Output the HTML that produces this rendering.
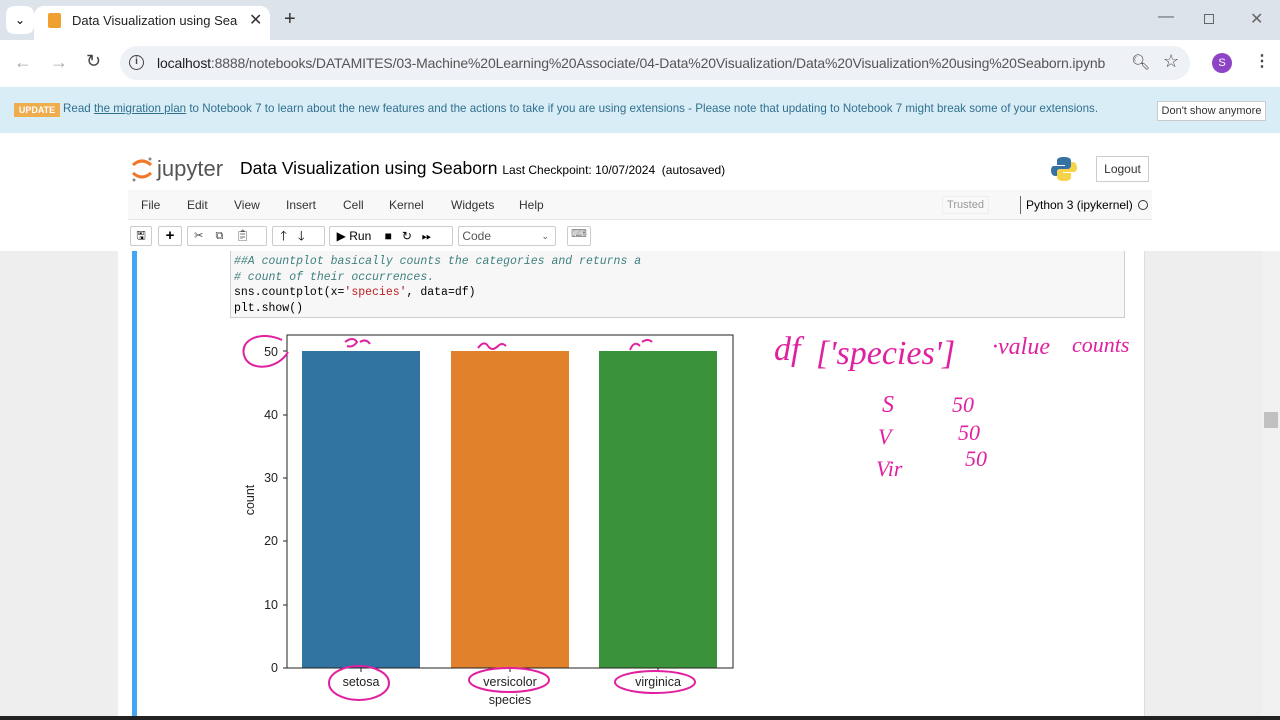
<!DOCTYPE html>
<html><head><meta charset="utf-8"><style>
*{margin:0;padding:0;box-sizing:border-box}
body{width:1280px;height:720px;overflow:hidden;background:#fff;font-family:"Liberation Sans",sans-serif;position:relative}
.abs{position:absolute;white-space:nowrap}
.mono{font-family:"Liberation Mono",monospace}
.btn{position:absolute;top:226px;height:20px;border:1px solid #ccc;background:#fff;border-radius:2px;white-space:nowrap}
</style></head><body>
<!-- tab bar -->
<div class="abs" style="left:0;top:0;width:1280px;height:40px;background:#dde3ea"></div>
<div class="abs" style="left:6px;top:6px;width:28px;height:28px;background:#fff;border-radius:8px;font-size:12px;text-align:center;line-height:28px">⌄</div>
<div class="abs" style="left:34px;top:6px;width:236px;height:36px;background:#fff;border-radius:10px 10px 0 0"></div>
<div class="abs" style="left:48px;top:13px;width:13px;height:15px;background:#f0a030;border-radius:2px"></div>
<div class="abs" style="left:72px;top:13px;width:166px;overflow:hidden;font-size:13px;color:#222">Data Visualization using Seaborn</div>
<div class="abs" style="left:249px;top:10px;font-size:16px;color:#333">✕</div>
<div class="abs" style="left:284px;top:8px;font-size:20px;color:#333">+</div>
<div class="abs" style="left:1158px;top:8px;font-size:16px;color:#666">—</div>
<div class="abs" style="left:1204px;top:14px;width:10px;height:10px;border:1px solid #666"></div>
<div class="abs" style="left:1250px;top:9px;font-size:16px;color:#666">✕</div>
<!-- address bar -->
<div class="abs" style="left:0;top:40px;width:1280px;height:46px;background:#fff"></div>
<div class="abs" style="left:14px;top:52px;font-size:18px;color:#aaa">←</div>
<div class="abs" style="left:50px;top:52px;font-size:18px;color:#aaa">→</div>
<div class="abs" style="left:86px;top:51px;font-size:18px;color:#444">↻</div>
<div class="abs" style="left:120px;top:46px;width:1070px;height:34px;background:#eef1f5;border-radius:17px"></div>
<div class="abs" style="left:129px;top:55px;width:15px;height:15px;border:1.5px solid #444;border-radius:50%;font-size:10px;text-align:center;line-height:12px;font-weight:bold;color:#444">i</div>
<div class="abs" style="left:157px;top:55px;font-size:14px;color:#202124;letter-spacing:-0.15px">localhost<span style="color:#555">:8888/notebooks/DATAMITES/03-Machine%20Learning%20Associate/04-Data%20Visualization/Data%20Visualization%20using%20Seaborn.ipynb</span></div>
<div class="abs" style="left:1131px;top:53px;font-size:15px;color:#444">🔍︎</div>
<div class="abs" style="left:1163px;top:51px;font-size:18px;color:#444">☆</div>
<div class="abs" style="left:1212px;top:53px;width:20px;height:20px;background:#8e44c4;border-radius:50%;color:#fff;font-size:11px;text-align:center;line-height:20px">S</div>
<div class="abs" style="left:1254px;top:51px;font-size:16px;color:#444;font-weight:bold">⋮</div>
<!-- banner -->
<div class="abs" style="left:0;top:87px;width:1280px;height:46px;background:#d9edf7"></div>
<div class="abs" style="left:14px;top:103px;width:46px;height:14px;background:#f0ad4e;color:#fff;font-size:9px;font-weight:bold;text-align:center;line-height:14px">UPDATE</div>
<div class="abs" style="left:63px;top:102px;font-size:11.6px;color:#31708f">Read <u>the migration plan</u> to Notebook 7 to learn about the new features and the actions to take if you are using extensions - Please note that updating to Notebook 7 might break some of your extensions.</div>
<div class="abs" style="left:1157px;top:101px;width:109px;height:20px;background:#fff;border:1px solid #ccc;font-size:11px;color:#333;text-align:center;line-height:18px">Don't show anymore</div>
<!-- header -->
<svg class="abs" style="left:130px;top:155px" width="24" height="28"><path d="M3 10 Q12 2 21 10" stroke="#f37726" stroke-width="3" fill="none"/><path d="M3 18 Q12 26 21 18" stroke="#f37726" stroke-width="3" fill="none"/><circle cx="4" cy="25" r="1.5" fill="#888"/><circle cx="20" cy="4" r="1.5" fill="#888"/></svg>
<div class="abs" style="left:157px;top:156px;font-size:22px;color:#555">jupyter</div>
<div class="abs" style="left:240px;top:158px;font-size:17.5px;color:#000">Data Visualization using Seaborn <span style="font-size:12px">Last Checkpoint: 10/07/2024&nbsp;&nbsp;(autosaved)</span></div>
<svg class="abs" style="left:1051px;top:156px" width="26" height="26"><path d="M13 1 C5 1 6 5 6 5 V9 H14 V10 H3 C0 10 0 14 0 14 C0 20 4 20 4 20 H6 V16 C6 13 9 13 9 13 H17 C19 13 20 11 20 10 V5 C20 2 17 1 13 1Z" fill="#3772a4"/><path d="M13 25 C21 25 20 21 20 21 V17 H12 V16 H23 C26 16 26 12 26 12 C26 6 22 6 22 6 H20 V10 C20 13 17 13 17 13 H9 C7 13 6 15 6 16 V21 C6 24 9 25 13 25Z" fill="#f5d44a"/></svg>
<div class="abs" style="left:1096px;top:156px;width:53px;height:26px;border:1px solid #ccc;font-size:12px;text-align:center;line-height:24px;color:#333">Logout</div>
<div class="abs" style="left:128px;top:190px;width:1024px;height:30px;background:#f8f8f8;border-bottom:1px solid #e7e7e7"></div>
<div class="abs" style="left:141px;top:198px;font-size:12px;color:#333">File</div>
<div class="abs" style="left:187px;top:198px;font-size:12px;color:#333">Edit</div>
<div class="abs" style="left:234px;top:198px;font-size:12px;color:#333">View</div>
<div class="abs" style="left:286px;top:198px;font-size:12px;color:#333">Insert</div>
<div class="abs" style="left:343px;top:198px;font-size:12px;color:#333">Cell</div>
<div class="abs" style="left:389px;top:198px;font-size:12px;color:#333">Kernel</div>
<div class="abs" style="left:451px;top:198px;font-size:12px;color:#333">Widgets</div>
<div class="abs" style="left:519px;top:198px;font-size:12px;color:#333">Help</div>
<div class="abs" style="left:942px;top:196px;width:47px;height:18px;border:1px solid #eee;font-size:11px;color:#999;text-align:center;line-height:16px">Trusted</div>
<div class="abs" style="left:1020px;top:196px;width:1px;height:18px;background:#666"></div>
<div class="abs" style="left:1026px;top:198px;font-size:12px;color:#000">Python 3 (ipykernel)</div>
<div class="abs" style="left:1138px;top:200px;width:10px;height:10px;border:1.5px solid #333;border-radius:50%"></div>
<!-- toolbar -->
<div class="btn" style="left:130px;width:22px;font-size:11px;text-align:center">🖫</div>
<div class="btn" style="left:158px;width:24px;font-size:15px;text-align:center;line-height:17px;font-weight:bold">+</div>
<div class="btn" style="left:187px;width:80px;font-size:11px;color:#444;line-height:18px">&nbsp;&nbsp;✂&nbsp;&nbsp;&nbsp;&nbsp;⧉&nbsp;&nbsp;&nbsp;&nbsp;📋︎</div>
<div class="btn" style="left:272px;width:53px;font-size:13px;line-height:17px">&nbsp;&nbsp;🡑&nbsp;&nbsp;&nbsp;🡓</div>
<div class="btn" style="left:329px;width:124px;font-size:12px;line-height:18px">&nbsp;&nbsp;▶ Run&nbsp;&nbsp;&nbsp;&nbsp;■&nbsp;&nbsp;&nbsp;↻&nbsp;&nbsp;&nbsp;⏩︎</div>
<div class="btn" style="left:458px;width:98px;font-size:12px;line-height:18px;color:#555">&nbsp;Code<span style="position:absolute;right:6px;font-size:9px">⌄</span></div>
<div class="btn" style="left:567px;width:24px;font-size:11px;text-align:center;color:#777">⌨</div>
<!-- notebook area -->
<div class="abs" style="left:0;top:251px;width:1280px;height:469px;background:#eee"></div>
<div class="abs" style="left:118px;top:251px;width:1027px;height:469px;background:#fff;border-right:1px solid #ddd"></div>
<div class="abs" style="left:132px;top:251px;width:5px;height:469px;background:#42a5f5"></div>
<div class="abs" style="left:1262px;top:251px;width:18px;height:469px;background:#f1f1f1"></div>
<div class="abs" style="left:1264px;top:412px;width:14px;height:16px;background:#c1c1c1"></div>
<div class="abs" style="left:0;top:716px;width:1280px;height:4px;background:#222"></div>
<div class="abs" style="left:230px;top:251px;width:895px;height:67px;background:#f7f7f7;border:1px solid #cfcfcf;border-top:none"></div>
<div class="abs mono" style="left:234px;top:254px;font-size:11.5px;line-height:15.5px;color:#000;white-space:pre"><i style="color:#408080">##A countplot basically counts the categories and returns a
# count of their occurrences.</i>
sns.countplot(x=<span style="color:#ba2121">'species'</span>, data=df)
plt.show()</div>
<!-- chart -->
<svg class="abs" style="left:230px;top:320px" width="540" height="400" font-family="Liberation Sans, sans-serif" font-size="12.5">
<rect x="72" y="31" width="118" height="317" fill="#3274a1"/>
<rect x="221" y="31" width="118" height="317" fill="#e1812c"/>
<rect x="369" y="31" width="118" height="317" fill="#3a923a"/>
<rect x="57" y="15" width="446" height="333" fill="none" stroke="#222" stroke-width="1"/>
<g fill="#222" text-anchor="end">
<text x="48" y="352">0</text><text x="48" y="289">10</text><text x="48" y="225">20</text><text x="48" y="162">30</text><text x="48" y="99">40</text><text x="48" y="36">50</text></g>
<g stroke="#222"><line x1="53" x2="57" y1="348" y2="348"/><line x1="53" x2="57" y1="285" y2="285"/><line x1="53" x2="57" y1="221" y2="221"/><line x1="53" x2="57" y1="158" y2="158"/><line x1="53" x2="57" y1="95" y2="95"/><line x1="53" x2="57" y1="31" y2="31"/>
<line x1="131" x2="131" y1="348" y2="352"/><line x1="280" x2="280" y1="348" y2="352"/><line x1="428" x2="428" y1="348" y2="352"/></g>
<g fill="#222" text-anchor="middle"><text x="131" y="366">setosa</text><text x="280" y="366">versicolor</text><text x="428" y="366">virginica</text><text x="280" y="384">species</text>
<text transform="translate(24 180) rotate(-90)">count</text></g>
<g fill="none" stroke="#e020a0" stroke-width="2">
<path d="M52 20 C30 10 10 20 14 35 C18 52 48 50 58 32"/>
<ellipse cx="129" cy="363" rx="30" ry="17"/>
<ellipse cx="279" cy="360" rx="40" ry="12"/>
<ellipse cx="425" cy="362" rx="40" ry="11"/>
<path d="M115 22 q8 -6 12 0 q-4 6 -10 4 M130 22 q6 -4 10 2"/>
<path d="M248 28 q6 -8 10 -2 q4 6 10 0 q4 -4 8 0"/>
<path d="M400 30 q4 -10 10 -4 M412 22 q6 -4 10 0"/>
</g>
</svg>
<svg class="abs" style="left:760px;top:320px" width="420" height="180" font-family="Liberation Serif, serif" font-style="italic" fill="#e020a0">
<text x="14" y="40" font-size="34">df</text>
<text x="56" y="44" font-size="34">['species']</text>
<text x="232" y="34" font-size="24">·value</text>
<text x="312" y="32" font-size="22">counts</text>
<text x="122" y="92" font-size="24">S</text>
<text x="192" y="92" font-size="22">50</text>
<text x="118" y="124" font-size="22">V</text>
<text x="198" y="120" font-size="22">50</text>
<text x="116" y="156" font-size="22">Vir</text>
<text x="205" y="146" font-size="22">50</text>
</svg>
</body></html>
